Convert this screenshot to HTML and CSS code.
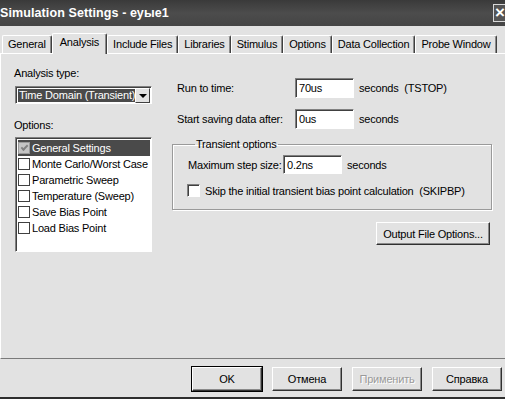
FILE: index.html
```html
<!DOCTYPE html>
<html lang="ru">
<head>
    <meta charset="UTF-8">
    <title>Simulation Settings - еуые1</title>
    <link rel="stylesheet" href="styles.css">
</head>
<body>
    <div class="window">
        <div class="titlebar">
            <span class="title">Simulation Settings - еуые1</span>
            <span class="close">×</span>
        </div>

        <div class="tabs">
            <span class="tab">General</span>
            <span class="tab active">Analysis</span>
            <span class="tab">Include Files</span>
            <span class="tab">Libraries</span>
            <span class="tab">Stimulus</span>
            <span class="tab">Options</span>
            <span class="tab">Data Collection</span>
            <span class="tab">Probe Window</span>
        </div>

        <div class="panel">
            <div class="left">
                <div class="label">Analysis type:</div>
                <div class="select">
                    <span class="select-value">Time Domain (Transient)</span>
                    <span class="select-arrow"></span>
                </div>

                <div class="label options-label">Options:</div>
                <div class="listbox">
                    <div class="item selected"><span class="check checked"></span>General Settings</div>
                    <div class="item"><span class="check"></span>Monte Carlo/Worst Case</div>
                    <div class="item"><span class="check"></span>Parametric Sweep</div>
                    <div class="item"><span class="check"></span>Temperature (Sweep)</div>
                    <div class="item"><span class="check"></span>Save Bias Point</div>
                    <div class="item"><span class="check"></span>Load Bias Point</div>
                </div>
            </div>

            <div class="right">
                <div class="row">
                    <span class="row-label">Run to time:</span>
                    <span class="input">70us</span>
                    <span class="unit">seconds&nbsp;&nbsp;(TSTOP)</span>
                </div>
                <div class="row">
                    <span class="row-label">Start saving data after:</span>
                    <span class="input">0us</span>
                    <span class="unit">seconds</span>
                </div>

                <fieldset class="group">
                    <legend>Transient options</legend>
                    <div class="row">
                        <span class="row-label short">Maximum step size:</span>
                        <span class="input">0.2ns</span>
                        <span class="unit">seconds</span>
                    </div>
                    <div class="check-row">
                        <span class="box"></span>
                        Skip the initial transient bias point calculation&nbsp;&nbsp;(SKIPBP)
                    </div>
                </fieldset>

                <div class="output-row">
                    <button class="btn wide">Output File Options...</button>
                </div>
            </div>
        </div>

        <div class="footer">
            <button class="btn default">OK</button>
            <button class="btn">Отмена</button>
            <button class="btn" disabled>Применить</button>
            <button class="btn">Справка</button>
        </div>
    </div>
</body>
</html>
```

FILE: styles.css
```css
body {
    margin: 0;
    font-family: "Liberation Sans", Arial, sans-serif;
    font-size: 11px;
    color: #000;
    background: #e2e2e2;
    overflow: hidden;
}
.window {
    width: 505px;
    height: 399px;
    display: flex;
    flex-direction: column;
    background: #e2e2e2;
    border-bottom: 2px solid #2e2e2e;
    box-sizing: border-box;
    overflow: hidden;
}

/* title bar */
.titlebar {
    height: 26px;
    flex: none;
    display: flex;
    align-items: center;
    justify-content: space-between;
    background: linear-gradient(180deg, #3a3a3a 0%, #4c4c4c 50%, #454545 100%);
    overflow: hidden;
}
.title {
    color: #fff;
    font-weight: bold;
    font-size: 12.5px;
    margin-left: 0;
    letter-spacing: 0.1px;
}
.close {
    width: 16px;
    height: 18px;
    margin-right: -4px;
    border: 1px solid #d8d8d8;
    border-right: none;
    box-sizing: border-box;
    color: #fff;
    font-weight: bold;
    font-size: 17px;
    line-height: 16px;
    padding-left: 1px;
    background: #555;
}

/* tabs */
.tabs {
    height: 27px;
    flex: none;
    display: flex;
    align-items: flex-end;
    padding-left: 2px;
    letter-spacing: -0.2px;
    white-space: nowrap;
}
.tab {
    flex: none;
    height: 18px;
    line-height: 17px;
    padding: 0 5px;
    border: 1px solid #fff;
    border-right-color: #404040;
    border-bottom: none;
    border-radius: 2px 2px 0 0;
    box-shadow: inset -1px 0 #8a8a8a;
    box-sizing: border-box;
}
.tab.active {
    height: 21px;
    line-height: 16px;
    padding: 0 7px;
    margin-bottom: -1px;
    background: #e2e2e2;
    position: relative;
    z-index: 1;
}

/* panel */
.panel {
    flex: 1;
    display: flex;
    border-top: 1px solid #fff;
    border-left: 1px solid #fff;
    border-bottom: 1px solid #7a7a7a;
    padding: 0 0 0 13px;
    gap: 20px;
    letter-spacing: -0.2px;
}
.left {
    width: 138px;
    display: flex;
    flex-direction: column;
    padding-top: 13px;
}
.label {
    line-height: 13px;
}
.options-label {
    margin-top: 15px;
}
.select {
    margin: 6px 0 0 1px;
    height: 18px;
    display: flex;
    border: 1px solid;
    border-color: #808080 #fff #fff #808080;
    box-shadow: inset 1px 1px #404040;
    background: #fff;
    box-sizing: border-box;
    padding: 2px 1px 1px 2px;
}
.select-value {
    flex: 1;
    background: #4a4a4a;
    color: #fff;
    line-height: 13px;
    padding-left: 1px;
    white-space: nowrap;
    overflow: hidden;
}
.select-arrow {
    width: 15px;
    margin-top: -1px;
    margin-bottom: -1px;
    display: flex;
    align-items: center;
    justify-content: center;
    background: #e2e2e2;
    border: 1px solid;
    border-color: #fff #404040 #404040 #fff;
    box-sizing: border-box;
}
.select-arrow::after {
    content: "";
    border-left: 4px solid transparent;
    border-right: 4px solid transparent;
    border-top: 4px solid #000;
}
.listbox {
    margin: 5px 0 0 1px;
    height: 115px;
    background: #fff;
    border: 1px solid;
    border-color: #808080 #fff #fff #808080;
    box-shadow: inset 1px 1px #404040;
    box-sizing: border-box;
    padding: 2px 1px 0 2px;
}
.item {
    height: 16px;
    display: flex;
    align-items: center;
    white-space: nowrap;
}
.item.selected {
    background: #4a4a4a;
    color: #fff;
}
.check {
    width: 12px;
    height: 12px;
    margin-right: 2px;
    border: 1px solid #404040;
    box-sizing: border-box;
    background: #fff;
    display: flex;
    align-items: center;
    justify-content: center;
}
.check.checked {
    background: #c4c4c4;
    border-color: #9a9a9a;
}
.check.checked::after {
    content: "";
    width: 5px;
    height: 2px;
    border-left: 2px solid #808080;
    border-bottom: 2px solid #808080;
    transform: rotate(-45deg);
    margin-top: -2px;
}

/* right side */
.right {
    width: 320px;
    padding-top: 24px;
    display: flex;
    flex-direction: column;
}
.row {
    display: flex;
    align-items: center;
    height: 20px;
    padding-left: 5px;
    margin-bottom: 11px;
}
.row-label {
    width: 118px;
}
.row-label.short {
    width: 95px;
}
.input {
    width: 59px;
    height: 20px;
    box-sizing: border-box;
    background: #fff;
    border: 1px solid;
    border-color: #808080 #fff #fff #808080;
    box-shadow: inset 1px 1px #404040;
    padding: 3px 0 0 3px;
    line-height: 13px;
}
.unit {
    margin-left: 5px;
}
.group {
    margin: -2px 0 0;
    padding: 4px 14px 12px 14px;
    border: 1px solid #9a9a9a;
    box-shadow: 1px 1px #fff, inset 1px 1px #fff;
    min-width: 0;
}
.group legend {
    margin-left: 8px;
    padding: 0 1px;
    line-height: 13px;
}
.group .row {
    padding-left: 1px;
    height: 19px;
    margin-bottom: 10px;
}
.group .input {
    height: 19px;
}
.check-row {
    display: flex;
    align-items: center;
    height: 13px;
    white-space: nowrap;
}
.box {
    width: 13px;
    height: 13px;
    margin-right: 5px;
    box-sizing: border-box;
    background: #fff;
    border: 1px solid;
    border-color: #808080 #fff #fff #808080;
    box-shadow: inset 1px 1px #404040;
}
.output-row {
    display: flex;
    justify-content: flex-end;
    margin-top: 12px;
    padding-right: 2px;
}

/* buttons */
.btn {
    font-family: inherit;
    font-size: 11px;
    letter-spacing: -0.2px;
    width: 70px;
    height: 24px;
    padding: 0;
    color: #000;
    background: #e2e2e2;
    border: 1px solid;
    border-color: #fff #303030 #303030 #fff;
    box-shadow: inset -1px -1px #8a8a8a;
    box-sizing: border-box;
}
.btn.wide {
    width: 114px;
    height: 23px;
}
.btn.default {
    outline: 1px solid #000;
    outline-offset: 0;
}
.btn:disabled {
    color: #9a9a9a;
    text-shadow: 1px 1px #fff;
}
.footer {
    height: 38px;
    flex: none;
    display: flex;
    justify-content: flex-end;
    align-items: flex-start;
    gap: 10px;
    padding: 8px 3px 0 0;
    box-sizing: border-box;
}
```
